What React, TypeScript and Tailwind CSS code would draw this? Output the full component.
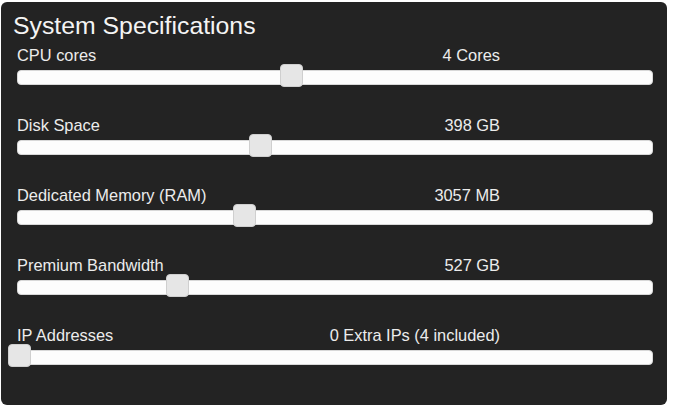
import React from "react";

type Row = { label: string; value: string; thumb: number };

const rows: Row[] = [
  { label: "CPU cores", value: "4 Cores", thumb: 262 },
  { label: "Disk Space", value: "398 GB", thumb: 231 },
  { label: "Dedicated Memory (RAM)", value: "3057 MB", thumb: 215 },
  { label: "Premium Bandwidth", value: "527 GB", thumb: 148 },
  { label: "IP Addresses", value: "0 Extra IPs (4 included)", thumb: -10 },
];

export default function App() {
  return (
    <div className="w-[674px] h-[408px] bg-white overflow-hidden font-['Liberation_Sans',Arial,sans-serif]">
      <div className="ml-[1px] mt-[2px] w-[666px] h-[403px] rounded-[6px] bg-[#232323] pt-[9px] pl-[16px]">
        <div className="ml-[-4px] h-[30px] leading-[30px] text-[24.8px] text-[#f4f4f4]">
          System Specifications
        </div>
        <div className="mt-[4px] flex flex-col gap-[30px]">
          {rows.map((r) => (
            <div key={r.label} className="flex flex-col">
              <div className="w-[483px] h-[20px] leading-[20px] text-[16.4px] text-[#ececec] flex justify-between">
                <span>{r.label}</span>
                <span>{r.value}</span>
              </div>
              <div className="relative mt-[5px] w-[636px] h-[15px] rounded-[4px] bg-[#fdfdfd] border border-[#d8d8d8]">
                <div
                  className="absolute top-[-7px] w-[23px] h-[23px] rounded-[4px] bg-[#e6e6e6] border border-[#cfcfcf]"
                  style={{ left: r.thumb }}
                />
              </div>
            </div>
          ))}
        </div>
      </div>
    </div>
  );
}
